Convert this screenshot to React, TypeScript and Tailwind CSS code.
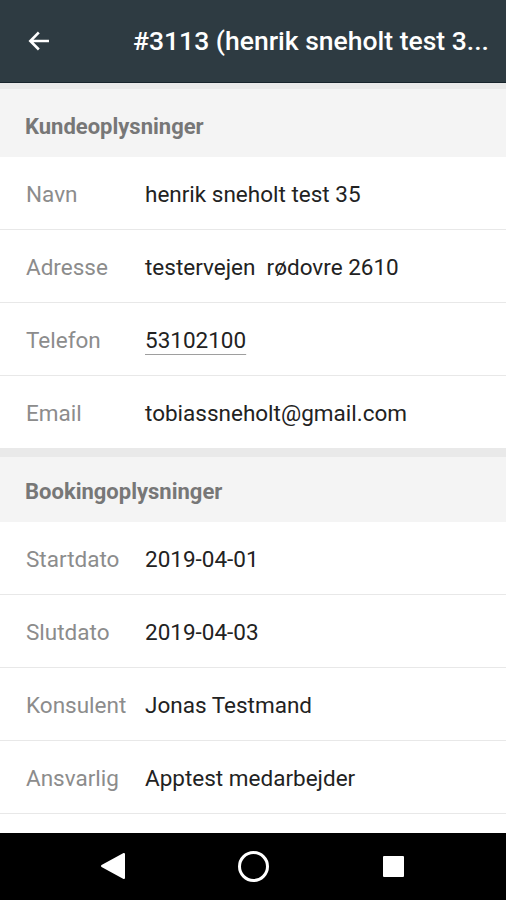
import React from "react";

const Row = ({ label, value, underline }: { label: string; value: string; underline?: boolean }) => (
  <div className="flex h-[73px] items-center border-b border-[#e8e8e8] bg-white pt-[3px]">
    <div className="w-[145px] pl-[26px] text-[22.5px] text-[#8c8c8c]">{label}</div>
    <div className="whitespace-pre text-[22.5px] text-[#222222]">
      {underline ? (
        <span className="underline decoration-[#9e9e9e] decoration-1 underline-offset-[6px]">{value}</span>
      ) : (
        value
      )}
    </div>
  </div>
);

export default function App() {
  return (
    <div
      className="flex h-[900px] w-[506px] flex-col overflow-hidden bg-white"
      style={{ fontFamily: "Roboto, 'Noto Sans', sans-serif" }}
    >
      <div className="flex h-[83px] shrink-0 items-center border-b border-[#17232b] bg-[#2e3b42]">
        <svg className="ml-[26px]" width="26" height="26" viewBox="0 0 24 24" fill="none">
          <path d="M20 12H4.5M11 5l-7 7 7 7" stroke="white" strokeWidth="2.4" strokeLinecap="square" />
        </svg>
        <div className="ml-[81px] truncate text-[26.5px] font-medium text-white">#3113 (henrik sneholt test 3...</div>
      </div>
      <div className="flex-1">
        <div className="h-[6px] bg-[#e9e9e9]" />
        <div className="flex h-[68px] items-center bg-[#f4f4f4] pl-[25px] pt-[6px] text-[22px] font-bold text-[#777777]">
          Kundeoplysninger
        </div>
        <Row label="Navn" value="henrik sneholt test 35" />
        <Row label="Adresse" value="testervejen  rødovre 2610" />
        <Row label="Telefon" value="53102100" underline />
        <div className="flex h-[72px] items-center bg-white pt-[3px]">
          <div className="w-[145px] pl-[26px] text-[22.5px] text-[#8c8c8c]">Email</div>
          <div className="text-[22.5px] text-[#222222]">tobiassneholt@gmail.com</div>
        </div>
        <div className="h-[9px] bg-[#e9e9e9]" />
        <div className="flex h-[65px] items-center bg-[#f4f4f4] pl-[25px] pt-[4px] text-[22px] font-bold text-[#777777]">
          Bookingoplysninger
        </div>
        <Row label="Startdato" value="2019-04-01" />
        <Row label="Slutdato" value="2019-04-03" />
        <Row label="Konsulent" value="Jonas Testmand" />
        <Row label="Ansvarlig" value="Apptest medarbejder" />
      </div>
      <div className="relative flex h-[67px] shrink-0 items-center bg-black">
        <svg className="absolute left-[100px] top-[19px]" width="26" height="28" viewBox="0 0 26 28">
          <path d="M24 2 L24 26 L2 14 Z" fill="white" stroke="white" strokeWidth="2" strokeLinejoin="round" />
        </svg>
        <svg className="absolute left-[236px] top-[16px]" width="35" height="35" viewBox="0 0 35 35">
          <circle cx="17.5" cy="17.5" r="14" fill="none" stroke="white" strokeWidth="3" />
        </svg>
        <div className="absolute left-[383px] top-[23px] h-[21px] w-[21px] rounded-[1px] bg-white" />
      </div>
    </div>
  );
}
